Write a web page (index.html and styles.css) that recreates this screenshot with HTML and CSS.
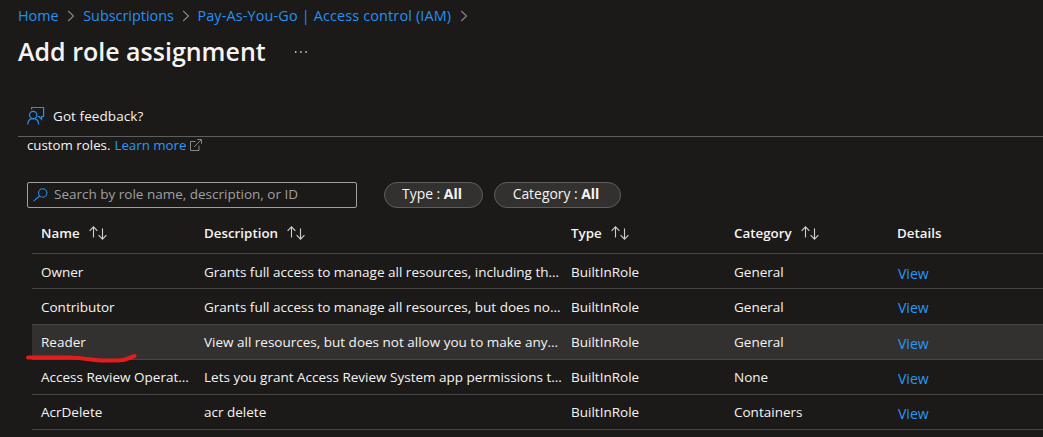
FILE: index.html
```html
<!DOCTYPE html>
<html lang="en">
<head>
<meta charset="utf-8">
<title>Add role assignment</title>
<link rel="stylesheet" href="styles.css">
</head>
<body>
<svg class="defs" width="0" height="0">
  <symbol id="chevron" viewBox="0 0 8 12"><path d="M1.200 1l5.300 5-5.300 5" fill="none" stroke="#8a8886" stroke-width="1.1"/></symbol>
  <symbol id="sort" viewBox="0 0 18 14"><path d="M4.500 11.500V1M.6 4.800l3.900-4 3.900 4M13.500 2.500v10.500M9.600 9.200l3.900 4 3.900-4" fill="none" stroke="#d2d0ce" stroke-width="1.1"/></symbol>
</svg>
<header class="top">
  <nav class="crumbs">
    <a>Home</a><svg class="chev"><use href="#chevron"/></svg>
    <a class="subs">Subscriptions</a><svg class="chev"><use href="#chevron"/></svg>
    <a class="long">Pay-As-You-Go | Access control (IAM)</a><svg class="chev"><use href="#chevron"/></svg>
  </nav>
  <div class="title-row">
    <h1>Add role assignment</h1>
    <svg class="dots" viewBox="0 0 12 2"><path d="M0 .3h1.400v1.400H0zM5.200 .3h1.400v1.400H5.200zM10.400 .3h1.400v1.400h-1.400z" fill="#e8e6e4"/></svg>
  </div>
</header>
<div class="toolbar">
  <svg class="feedback" viewBox="0 0 18 19" fill="none" stroke="#2b8fea" stroke-width="1.2"><path d="M4.600 3.500V1.500h12v9h-2v2.700l-2.700-2.700h-1"/><circle cx="6.200" cy="9" r="3.700"/><path d="M.7 18.500c.2-3.600 2.300-5.800 5.500-5.800s5.300 2.200 5.500 5.800"/></svg>
  <span>Got feedback?</span>
</div>
<main>
  <p class="intro"><span>custom roles.</span> <a>Learn more</a><svg class="ext" viewBox="0 0 12 12" fill="none" stroke="#8a8886" stroke-width="1"><path d="M5.500 2.500H.5v9h8.500V6.500M4 8l7.300-7.300M7.300.5h4.200v4.200"/></svg></p>
  <div class="filters">
    <div class="search"><svg viewBox="0 0 15 14" fill="none" stroke="#2b8fea" stroke-width="1.1"><circle cx="9.700" cy="5" r="4.200"/><path d="M6.700 8L.6 13.200"/></svg><span>Search by role name, description, or ID</span></div>
    <div class="pill type"><span>Type : <b>All</b></span></div>
    <div class="pill category"><span>Category : <b>All</b></span></div>
  </div>
  <div class="table">
    <div class="row head">
      <div>Name<svg><use href="#sort"/></svg></div>
      <div>Description<svg><use href="#sort"/></svg></div>
      <div>Type<svg><use href="#sort"/></svg></div>
      <div>Category<svg><use href="#sort"/></svg></div>
      <div>Details</div>
    </div>
    <div class="row low"><div>Owner</div><div>Grants full access to manage all resources, including th...</div><div>BuiltInRole</div><div>General</div><a>View</a></div>
    <div class="row tall"><div>Contributor</div><div>Grants full access to manage all resources, but does no...</div><div>BuiltInRole</div><div>General</div><a>View</a></div>
    <div class="row hover"><div>Reader</div><div>View all resources, but does not allow you to make any...</div><div>BuiltInRole</div><div>General</div><a>View</a>
      <svg class="mark" viewBox="0 0 112 10"><path d="M2 4.500H43C60 5 66 7.500 76 7.500H92C100 7.500 103 5 108.500 3" fill="none" stroke="#e41c1c" stroke-width="4" stroke-linecap="round" stroke-linejoin="round"/></svg>
    </div>
    <div class="row"><div>Access Review Operat...</div><div>Lets you grant Access Review System app permissions t...</div><div>BuiltInRole</div><div>None</div><a>View</a></div>
    <div class="row"><div>AcrDelete</div><div>acr delete</div><div>BuiltInRole</div><div>Containers</div><a>View</a></div>
  </div>
</main>
</body>
</html>
```
FILE: styles.css
```css
* { box-sizing: border-box; }
body {
  margin: 0;
  height: 437px;
  overflow: hidden;
  background: #1b1a19;
  color: #f6f4f2;
  font: 13.5px/20px "Open Sans", "Noto Sans", sans-serif;
  white-space: nowrap;
}
.defs { display: block; }
a { color: #2899f5; }
.top { padding: 6px 0 0 18px; height: 95px; }
.crumbs { display: flex; align-items: center; height: 20px; font-size: 14.4px; }
.crumbs a { color: #2590f2; }
.crumbs .subs { padding-left: 1px; }
.crumbs .long { letter-spacing: .16px; }
.chev { width: 8px; height: 12px; margin: 0 7px 0 8.5px; }
.title-row { display: flex; align-items: center; height: 34px; margin-top: 8px; }
h1 { margin: 0; font-size: 25px; line-height: 34px; font-weight: 600; }
.dots { width: 12px; height: 2px; margin: 2px 0 0 29px; }
.toolbar {
  display: flex;
  align-items: center;
  height: 42px;
  margin-left: 18px;
  padding-left: 9px;
  border-bottom: 1px solid #605e5c;
}
.toolbar span { letter-spacing: .08px; }
.feedback { width: 18px; height: 19px; margin-right: 8px; }
main { padding-left: 27px; }
.intro { display: flex; align-items: center; margin: 0; height: 17px; padding-bottom: 1px; font-size: 13.3px; }
.intro a { margin-left: 4px; }
.ext { width: 12px; height: 12px; margin-left: 3px; }
.filters { display: flex; margin-top: 28px; height: 26px; }
.search {
  display: flex;
  align-items: center;
  width: 330px;
  padding-left: 5px;
  border: 1px solid #a19f9d;
  border-radius: 2px;
  color: #a19f9d;
}
.search svg { width: 15px; height: 14px; margin-right: 6px; }
.search span, .pill span { padding-bottom: 2px; }
.pill {
  display: flex;
  align-items: center;
  justify-content: center;
  padding-right: 3px;
  background: #323130;
  border: 1px solid #605e5c;
  border-radius: 13px;
  font-size: 13.9px;
}
.type { width: 99px; margin-left: 27px; }
.category { width: 127px; margin-left: 11px; }
.table { margin-left: 5px; padding-top: 5px; }
.row {
  position: relative;
  display: grid;
  grid-template-columns: 163px 367px 163px 163px 1fr;
  align-items: center;
  height: 35px;
  padding-left: 9px;
  border-bottom: 1px solid #484644;
}
.row.low { padding-top: 2px; }
.row.tall { height: 36px; }
.row.hover { background: #323130; }
.row.head { height: 41px; font-size: 13.35px; font-weight: 600; }
.row a { padding: 3px 0 0 1px; font-size: 14px; }
.head > div { display: flex; align-items: center; }
.head svg { width: 18px; height: 14px; margin-left: 9px; }
.mark { position: absolute; left: -6px; bottom: -4px; width: 112px; height: 10px; z-index: 1; }
```
